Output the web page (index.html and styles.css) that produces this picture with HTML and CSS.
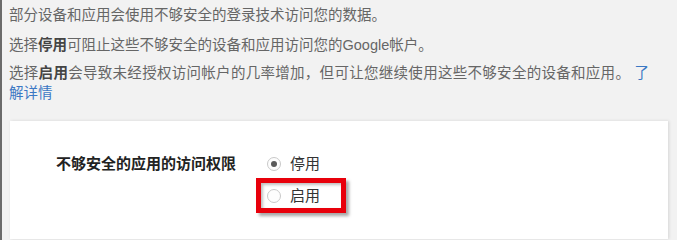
FILE: index.html
```html
<!DOCTYPE html>
<html lang="zh-CN">
<head>
<meta charset="utf-8">
<title>不够安全的应用</title>
<link rel="stylesheet" href="styles.css">
</head>
<body>
<div class="page">
  <div class="intro">
    <p class="para p1">部分设备和应用会使用不够安全的登录技术访问您的数据。</p>
    <p class="para p2">选择<b>停用</b>可阻止这些不够安全的设备和应用访问您的Google帐户。</p>
    <p class="para p3">选择<b>启用</b>会导致未经授权访问帐户的几率增加，但可让您继续使用这些不够安全的设备和应用。 <a class="link" href="#">了解详情</a></p>
  </div>
  <div class="card">
    <div class="setting">
      <div class="setting-label">不够安全的应用的访问权限</div>
      <div class="options">
        <label class="option">
          <span class="radio checked"></span>
          <span class="option-text">停用</span>
        </label>
        <label class="option">
          <span class="radio"></span>
          <span class="option-text">启用</span>
          <span class="highlight"></span>
        </label>
      </div>
    </div>
  </div>
</div>
</body>
</html>
```
FILE: styles.css
```css
html, body {
  margin: 0;
  padding: 0;
  background: #f2f2f2;
  height: 100%;
  overflow: hidden;
}
body {
  font-family: "Liberation Sans", "Noto Sans CJK SC", sans-serif;
  font-size: 14.5px;
  color: #666;
}
.page {
  border-left: 2px solid #6b6b6b;
  height: 100%;
  padding-left: 7px;
  box-sizing: border-box;
}
.intro {
  width: 640px;
  padding-top: 5px;
}
.para {
  margin: 0;
  line-height: 20px;
  text-align: justify;
}
.p1 { margin-bottom: 10px; }
.p2 { margin-bottom: 8px; }
.para b {
  color: #444;
  font-weight: bold;
}
.link {
  color: #3b78c4;
  text-decoration: none;
}
.card {
  margin-top: 18px;
  margin-left: 1px;
  width: 658px;
  height: 118px;
  background: #ffffff;
  box-shadow: 1px 0 3px rgba(0, 0, 0, 0.12);
  padding: 33px 0 0 46px;
  box-sizing: border-box;
}
.setting {
  display: flex;
}
.setting-label {
  width: 211px;
  font-size: 15px;
  font-weight: bold;
  color: #222;
  line-height: 20px;
}
.options {
  display: flex;
  flex-direction: column;
  gap: 12px;
}
.option {
  position: relative;
  display: flex;
  align-items: center;
  gap: 9px;
  line-height: 20px;
  font-size: 15px;
  color: #333;
}
.radio {
  width: 14px;
  height: 14px;
  border: 1px solid #c9c9c9;
  border-radius: 50%;
  box-sizing: border-box;
  background: #fdfdfd;
  display: flex;
  align-items: center;
  justify-content: center;
}
.radio.checked::after {
  content: "";
  width: 6px;
  height: 6px;
  border-radius: 50%;
  background: #5a5a5a;
}
.highlight {
  position: absolute;
  left: -11px;
  top: -8px;
  width: 90px;
  height: 35px;
  border: 5px solid #e8000b;
  box-sizing: border-box;
  box-shadow: 3px 3px 3px rgba(0, 0, 0, 0.35), inset 2px 2px 3px rgba(0, 0, 0, 0.25);
}
```
